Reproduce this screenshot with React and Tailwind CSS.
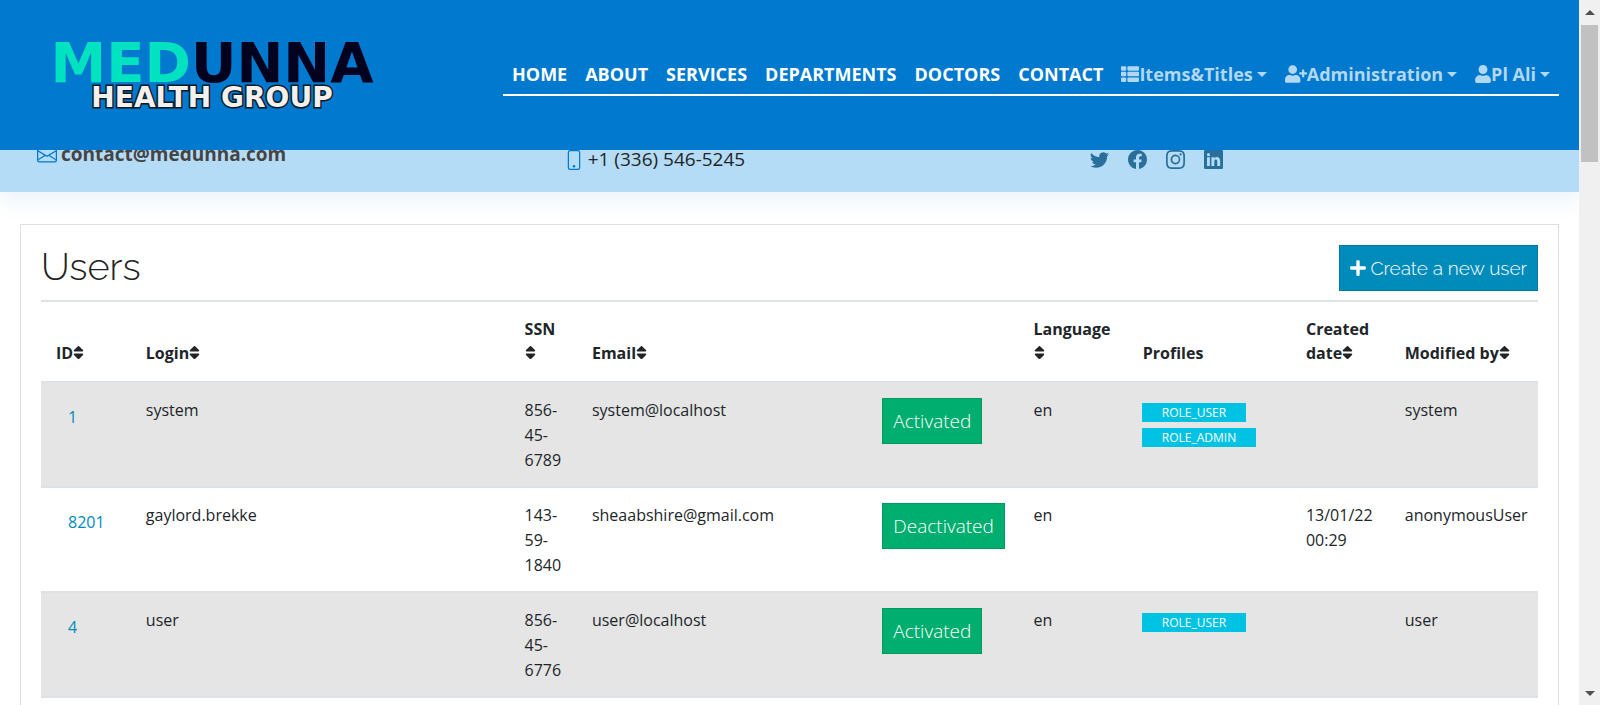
import { FaThList, FaUserPlus, FaUser, FaSort, FaPlus } from "react-icons/fa";
import { BsEnvelope, BsPhone, BsTwitter, BsFacebook, BsInstagram, BsLinkedin } from "react-icons/bs";

const links = ["HOME", "ABOUT", "SERVICES", "DEPARTMENTS", "DOCTORS", "CONTACT"];
const menus = [
  { label: "Items&Titles", Icon: FaThList, size: "size-[18px]" },
  { label: "Administration", Icon: FaUserPlus, size: "h-[18px] w-[22px]" },
  { label: "Pl Ali", Icon: FaUser, size: "h-[18px] w-4" },
];
const socials = [
  { label: "Twitter", Icon: BsTwitter },
  { label: "Facebook", Icon: BsFacebook },
  { label: "Instagram", Icon: BsInstagram },
  { label: "LinkedIn", Icon: BsLinkedin },
];
const columns = [
  { label: "ID", sort: true, width: "w-[6%]" },
  { label: "Login", sort: true, width: "w-[25.3%]" },
  { label: "SSN", sort: true, width: "w-[4.5%]", wrap: true },
  { label: "Email", sort: true, width: "w-[19.4%]" },
  { label: "", width: "w-[10.1%]" },
  { label: "Language", sort: true, width: "w-[7.3%]", wrap: true },
  { label: "Profiles", width: "w-[10.9%]" },
  { label: "Created date", sort: true, width: "w-[6.6%]" },
  { label: "Modified by", sort: true, width: "w-[9.9%]" },
];
const users = [
  { id: "1", login: "system", ssn: "856-45-6789", email: "system@localhost", status: "Activated", lang: "en", roles: ["ROLE_USER", "ROLE_ADMIN"], created: "", by: "system" },
  { id: "8201", login: "gaylord.brekke", ssn: "143-59-1840", email: "sheaabshire@gmail.com", status: "Deactivated", lang: "en", roles: [], created: "13/01/22 00:29", by: "anonymousUser" },
  { id: "4", login: "user", ssn: "856-45-6776", email: "user@localhost", status: "Activated", lang: "en", roles: ["ROLE_USER"], created: "", by: "user" },
];

function Logo() {
  return (
    <a href="#home" aria-label="Medunna Health Group" className="block shrink-0">
      <svg viewBox="0 0 368 120" className="h-[120px] w-[368px]" fontFamily="DejaVu Sans, sans-serif" fontWeight="700">
        <text x="184" y="67" textAnchor="middle" fontSize="56">
          <tspan fill="#00e2c0">MED</tspan>
          <tspan fill="#02021f">UNNA</tspan>
        </text>
        <text x="184" y="92" textAnchor="middle" fontSize="28" fill="#f4f0ee" stroke="#0b1a26" strokeWidth="3" paintOrder="stroke">
          HEALTH GROUP
        </text>
      </svg>
    </a>
  );
}

function Header() {
  return (
    <header className="flex h-[150px] shrink-0 items-center justify-between bg-[#0079ce] pr-5 pl-7">
      <Logo />
      <nav className="mt-4 mb-[10px] flex items-center border-b-2 border-white text-[18px] leading-[27px] font-bold whitespace-nowrap">
        {links.map((l) => (
          <a key={l} href={"#" + l.toLowerCase()} className="px-[9px] pb-1.5 text-white">{l}</a>
        ))}
        {menus.map(({ label, Icon, size }) => (
          <button key={label} type="button" className="flex items-center px-[9px] pb-1.5 text-[#b2d7f0]">
            <Icon className={size + " shrink-0"} />
            {label}
            <span className="ml-1 border-x-[5px] border-t-[5px] border-x-transparent border-t-current" />
          </button>
        ))}
      </nav>
    </header>
  );
}

function TopBar() {
  return (
    <div className="grid h-[42px] shrink-0 grid-cols-3 items-start overflow-hidden bg-[#b5dcf7] px-[37px] text-[19px] leading-[27px]">
      <a href="mailto:contact@medunna.com" className="-mt-[9px] flex items-center gap-1 font-bold text-[#444]">
        <BsEnvelope className="size-5 text-[#0079ce]" />
        contact@medunna.com
      </a>
      <span className="-mt-1 flex items-center gap-1 pl-[25px] text-[#212529]">
        <BsPhone className="size-5 text-[#0079ce]" />
        +1 (336) 546-5245
      </span>
      <div className="flex gap-[19px] pl-[50px] text-[#2a6f9b]">
        {socials.map(({ label, Icon }) => (
          <a key={label} href={"#" + label} aria-label={label}><Icon className="size-[19px]" /></a>
        ))}
      </div>
    </div>
  );
}

function UsersTable() {
  return (
    <table className="w-full table-fixed border-collapse text-left text-[16px] leading-[25px] text-[#212529]">
      <thead>
        <tr className="border-y-2 border-[#dee2e6]">
          {columns.map((c, i) => (
            <th key={i} className={c.width + " pt-[15px] pb-4 pl-[15px] align-bottom leading-6 font-bold"}>
              {c.label}
              {c.wrap && <br />}
              {c.sort && <FaSort className="inline h-[17px] w-[11px] align-[-2px]" />}
            </th>
          ))}
        </tr>
      </thead>
      <tbody>
        {users.map((u) => (
          <tr key={u.id} className="border-b-2 border-[#dee2e6] align-top odd:bg-[#e5e5e5]">
            <td className="pt-[15px] pb-[13px] pl-[15px]"><a href={"#user-" + u.id} className="block px-3 pt-[7px] text-[#008cba]">{u.id}</a></td>
            <td className="pt-[15px] pb-[13px] pl-[15px]">{u.login}</td>
            <td className="pt-[15px] pb-[13px] pl-[15px]">{u.ssn}</td>
            <td className="pt-[15px] pb-[13px] pl-[15px]">{u.email}</td>
            <td className="pt-[15px] pb-[13px] pl-[15px]">
              <button type="button" className="h-[46px] border border-[#009a61] bg-[#00ae6f] px-[10px] text-[19px] font-light text-white">{u.status}</button>
            </td>
            <td className="pt-[15px] pb-[13px] pl-[15px]">{u.lang}</td>
            <td className="pt-[15px] pb-[13px] pl-[14px]">
              <div className="flex flex-col items-start gap-1.5 pt-[5px]">
                {u.roles.map((r) => (
                  <span key={r} className="bg-[#00c3e3] px-5 text-[12px] leading-[19px] text-white">{r}</span>
                ))}
              </div>
            </td>
            <td className="pt-[15px] pb-[13px] pl-[15px]">{u.created}</td>
            <td className="pt-[15px] pb-[13px] pl-[15px]">{u.by}</td>
          </tr>
        ))}
      </tbody>
    </table>
  );
}

function ScrollBar() {
  return (
    <div aria-hidden="true" className="flex w-[21px] shrink-0 flex-col items-center bg-[#f0f0f0]">
      <span className="my-[10px] border-x-[5px] border-b-[5px] border-x-transparent border-b-[#505050]" />
      <span className="h-[137px] w-[17px] bg-[#c1c1c1]" />
      <span className="mt-auto mb-[9px] border-x-[5px] border-t-[5px] border-x-transparent border-t-[#505050]" />
    </div>
  );
}

export default function App() {
  return (
    <div className="flex h-screen overflow-hidden bg-white font-['Open_Sans',sans-serif]">
      <div className="flex min-w-0 flex-1 flex-col">
        <div className="shrink-0 shadow-[0_10px_20px_rgba(25,119,204,0.08)]">
          <Header />
          <TopBar />
        </div>
        <main className="mx-5 mt-8 shrink-0 grow border border-[#dfdfdf] bg-white px-5 pt-5 pb-10">
          <div className="mb-[9px] flex items-start justify-between">
            <h1 className="text-[38px] leading-[44px] font-light text-[#222] font-[Raleway,Lato,sans-serif]">Users</h1>
            <button type="button" className="flex h-[46px] items-center gap-1 border border-[#0079a1] bg-[#008cba] px-[10px] text-[19px] font-light text-white font-[Raleway,Lato,sans-serif]">
              <FaPlus className="h-[18px] w-4" />
              Create a new user
            </button>
          </div>
          <UsersTable />
        </main>
      </div>
      <ScrollBar />
    </div>
  );
}
